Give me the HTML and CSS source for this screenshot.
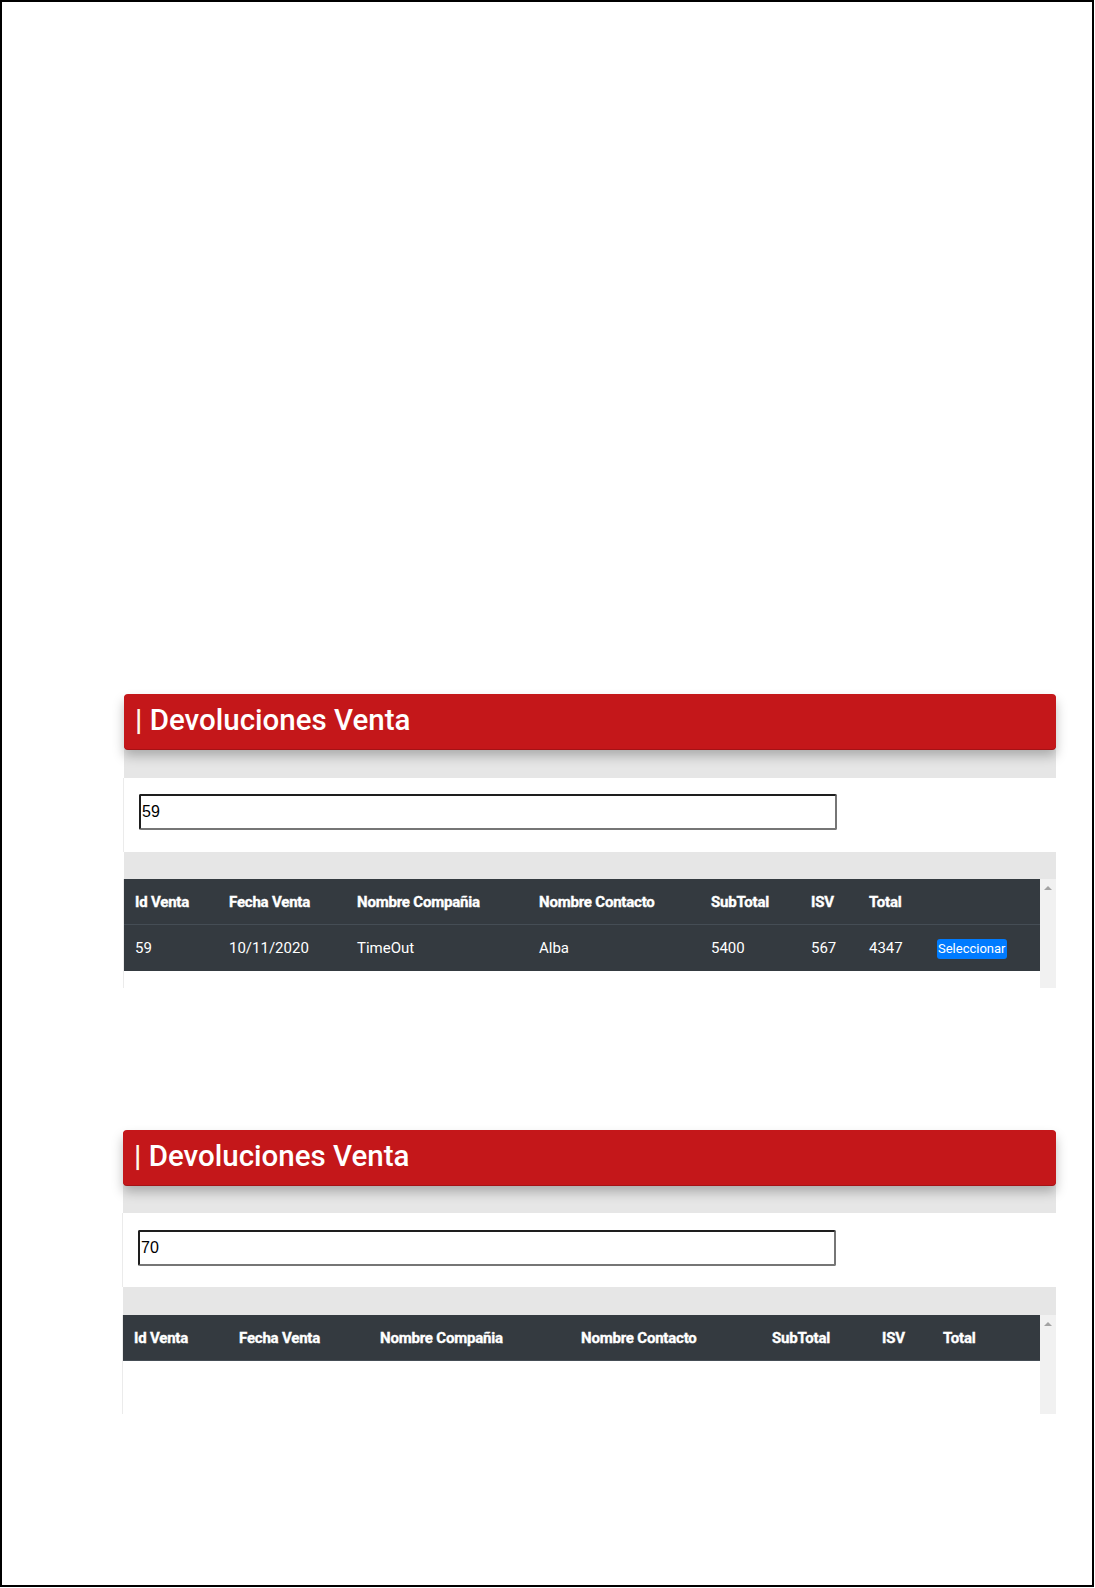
FILE: index.html
```html
<!DOCTYPE html>
<html lang="es">
<head>
<meta charset="utf-8">
<title>Devoluciones Venta</title>
<link rel="stylesheet" href="styles.css">
</head>
<body>
<div class="page">
  <section class="panel panel-a">
    <h1 class="panel-title"><span class="bar">|</span> Devoluciones Venta</h1>
    <div class="band band-top"></div>
    <div class="search"><input class="search-input" type="text" value="59"></div>
    <div class="band band-bottom"></div>
    <div class="grid-area">
      <div class="grid-scroll">
        <table class="grid">
          <colgroup>
            <col class="a1"><col class="a2"><col class="a3"><col class="a4"><col class="a5"><col class="a6"><col class="a7"><col class="a8">
          </colgroup>
          <thead>
            <tr><th>Id Venta</th><th>Fecha Venta</th><th>Nombre Compañia</th><th>Nombre Contacto</th><th>SubTotal</th><th>ISV</th><th>Total</th><th></th></tr>
          </thead>
          <tbody>
            <tr><td>59</td><td>10/11/2020</td><td>TimeOut</td><td>Alba</td><td>5400</td><td>567</td><td>4347</td><td><button class="btn-select" type="button">Seleccionar</button></td></tr>
          </tbody>
        </table>
      </div>
      <div class="scrollbar"><span class="arrow-up"></span></div>
    </div>
  </section>

  <section class="panel panel-b">
    <h1 class="panel-title"><span class="bar">|</span> Devoluciones Venta</h1>
    <div class="band band-top"></div>
    <div class="search"><input class="search-input" type="text" value="70"></div>
    <div class="band band-bottom"></div>
    <div class="grid-area">
      <div class="grid-scroll">
        <table class="grid">
          <colgroup>
            <col class="b1"><col class="b2"><col class="b3"><col class="b4"><col class="b5"><col class="b6"><col class="b7">
          </colgroup>
          <thead>
            <tr><th>Id Venta</th><th>Fecha Venta</th><th>Nombre Compañia</th><th>Nombre Contacto</th><th>SubTotal</th><th>ISV</th><th>Total</th></tr>
          </thead>
        </table>
      </div>
      <div class="scrollbar"><span class="arrow-up"></span></div>
    </div>
  </section>
</div>
</body>
</html>
```

FILE: styles.css
```css
body {
  margin: 0;
  background: #fff;
  font-family: Roboto, "Liberation Sans", sans-serif;
}

.page {
  width: 1094px;
  height: 1587px;
  box-sizing: border-box;
  border: 2px solid #000;
  padding-top: 692px;
}

.panel {
  width: 932px;
  margin-left: 122px;
}

.panel-b {
  width: 933px;
  margin-left: 121px;
  margin-top: 142px;
}

.panel-title {
  position: relative;
  margin: 0;
  height: 55px;
  line-height: 53px;
  padding-left: 11px;
  background: #c4171a;
  color: #fff;
  font-size: 29.5px;
  font-weight: 500;
  border-radius: 4px;
  box-shadow: 0 1px 0 #a51215, 0 7px 12px rgba(0, 0, 0, 0.26);
}

.bar {
  color: #fffbe8;
}

.band {
  background: #e6e6e6;
}

.band-top {
  height: 29px;
}

.band-bottom {
  height: 27px;
}

.panel-b .band-top,
.panel-b .band-bottom {
  height: 28px;
}

.search {
  height: 74px;
  box-sizing: border-box;
  padding: 16px 0 0 15px;
  background: #fff;
  box-shadow: -1px 0 0 #ebebeb;
}

.panel-b .search {
  padding-top: 17px;
}

.search-input {
  display: block;
  width: 698px;
  height: 36px;
  box-sizing: border-box;
  margin: 0;
  padding: 0 1px;
  border: 2px solid;
  border-color: #1e1e1e #767676 #767676 #1e1e1e;
  border-radius: 2px;
  background: #fff;
  color: #000;
  font-family: "Liberation Sans", Arial, sans-serif;
  font-size: 16px;
  outline: none;
}

.grid-area {
  display: flex;
  height: 109px;
  background: #fff;
  box-shadow: -1px 0 0 #ebebeb;
}

.panel-b .grid-area {
  height: 99px;
}

.grid-scroll {
  flex: 1;
  overflow: hidden;
}

.scrollbar {
  width: 16px;
  flex-shrink: 0;
  box-sizing: border-box;
  padding-top: 7px;
  display: flex;
  justify-content: center;
  align-items: flex-start;
  background: #f1f1f1;
}

.arrow-up {
  width: 0;
  height: 0;
  border-left: 4px solid transparent;
  border-right: 4px solid transparent;
  border-bottom: 4px solid #a3a3a3;
}

.grid {
  width: 100%;
  table-layout: fixed;
  border-collapse: collapse;
  color: #fff;
  font-size: 15px;
  line-height: 22px;
}

.grid th,
.grid td {
  padding: 12px 11px;
  text-align: left;
  white-space: nowrap;
  background: #343a40;
  vertical-align: middle;
}

.grid th {
  font-weight: 700;
  letter-spacing: -0.2px;
  -webkit-text-stroke: 0.35px #fff;
  padding-bottom: 11px;
  border-bottom: 1px solid #454d55;
}

.a1 { width: 94px; }
.a2 { width: 128px; }
.a3 { width: 182px; }
.a4 { width: 172px; }
.a5 { width: 100px; }
.a6 { width: 58px; }
.a7 { width: 68px; }
.a8 { width: 114px; }

.b1 { width: 105px; }
.b2 { width: 141px; }
.b3 { width: 201px; }
.b4 { width: 191px; }
.b5 { width: 110px; }
.b6 { width: 61px; }
.b7 { width: 108px; }

.btn-select {
  display: inline-block;
  margin: 0;
  padding: 1px 1px;
  border: 0;
  border-radius: 3px;
  background: #007bff;
  color: #fff;
  font-family: Roboto, "Liberation Sans", sans-serif;
  font-size: 13px;
  line-height: 18px;
}
```
